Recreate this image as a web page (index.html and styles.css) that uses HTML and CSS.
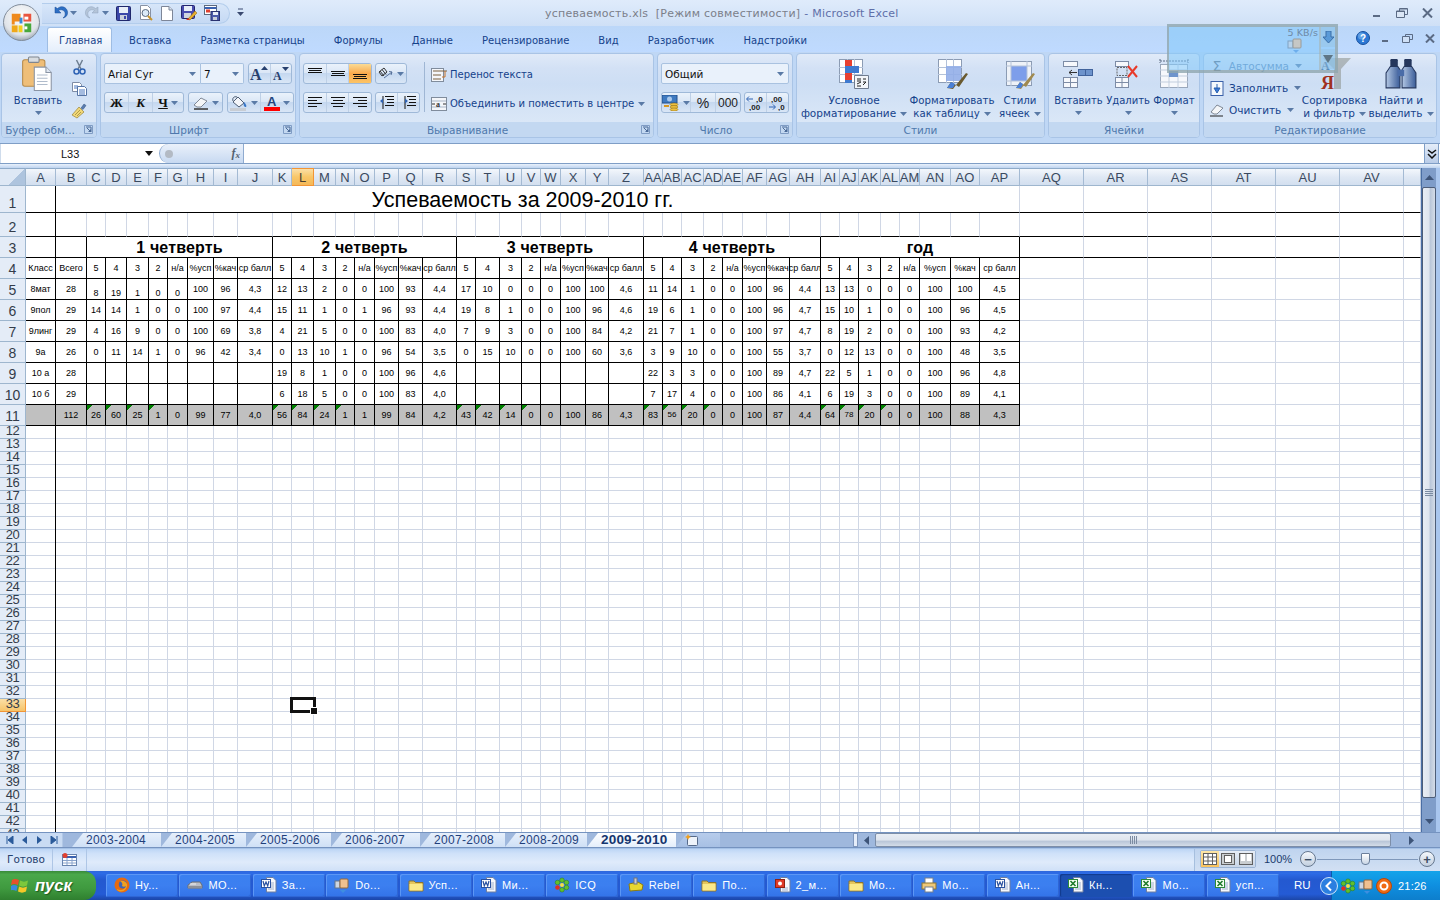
FILE: index.html
```html
<!DOCTYPE html>
<html lang="ru">
<head>
<meta charset="utf-8">
<title>успеваемость.xls [Режим совместимости] - Microsoft Excel</title>
<link rel="stylesheet" href="styles.css">
</head>
<body>
<svg class="defs" aria-hidden="true">
  <symbol id="i-word" viewBox="0 0 16 16"><path d="M5.500 .5h6.500l3 3v11.500h-9.500z" fill="#f6f8fc" stroke="#6f7f9f"/><path d="M7 6h6M7 8h6M7 10h6M7 12h6" stroke="#9fb0cc"/><rect x=".5" y="2.500" width="9" height="8" fill="#fff" stroke="#2a52a0"/><path d="M2 4l1.300 5 1.700-4 1.700 4L8 4" fill="none" stroke="#2a52a0" stroke-width="1.200"/></symbol>
  <symbol id="i-excel" viewBox="0 0 16 16"><path d="M5.500 .5h6.500l3 3v11.500h-9.500z" fill="#f6f8fc" stroke="#6f7f9f"/><path d="M7 6h6M7 8h6M7 10h6M7 12h6" stroke="#9fb0cc"/><rect x=".5" y="2.500" width="9" height="8" fill="#f4fff2" stroke="#2c8a3a"/><path d="M2.500 4l5 5M7.500 4l-5 5" stroke="#1e7a2c" stroke-width="1.600"/></symbol>
  <symbol id="i-folder" viewBox="0 0 16 16"><path d="M1 4h5l1.500 1.500H15V14H1z" fill="#e6c65c" stroke="#8b7430"/><path d="M1.500 7h13v6.500h-13z" fill="#fbe98a"/></symbol>
  <symbol id="i-ff" viewBox="0 0 16 16"><circle cx="8" cy="8" r="7.500" fill="#e66a10"/><circle cx="8.800" cy="7.400" r="4" fill="#3f64b4"/><path d="M3 12c3 2 8 1 9-3-1 1-3 1-4 0 1-2 0-4-2-5 4-1 6 1 7 3 1 4-3 8-7 7.500C4 14 3 13 3 12z" fill="#f0a020"/></symbol>
  <symbol id="i-drive" viewBox="0 0 16 16"><path d="M1 8l4-3h8l2 3v3H1z" fill="#b9bdc5" stroke="#6a6e75"/><path d="M1 9h14v2.500H1z" fill="#8c9098"/><path d="M3 7h6" stroke="#eee"/></symbol>
  <symbol id="i-dm" viewBox="0 0 16 16"><rect x="1" y="4" width="5" height="7" fill="#cdd6e2" stroke="#67768a"/><rect x="6" y="2" width="8" height="9" rx="1" fill="#f0c090" stroke="#94693c"/><path d="M6 13h6l-3 3z" fill="#3f8ee0"/></symbol>
  <symbol id="i-ppt" viewBox="0 0 16 16"><path d="M5.500 .5h6.500l3 3v11.500h-9.500z" fill="#f6f8fc" stroke="#6f7f9f"/><path d="M7 11h6M7 13h6" stroke="#9fb0cc"/><rect x=".5" y="2.500" width="9" height="8" fill="#e03a28" stroke="#902010"/><circle cx="5" cy="6.500" r="2" fill="#fff"/></symbol>
  <symbol id="i-print" viewBox="0 0 16 16"><rect x="4" y="1" width="8" height="6" fill="#fff" stroke="#76808e"/><rect x="1" y="6" width="14" height="6" fill="#eec878" stroke="#8b7430"/><rect x="4" y="10" width="8" height="5" fill="#fff" stroke="#76808e"/></symbol>
  <symbol id="i-icq" viewBox="0 0 16 16"><g fill="#5fc02c" stroke="#2e7a10" stroke-width=".5"><circle cx="8" cy="3.200" r="2.300"/><circle cx="12.500" cy="5.500" r="2.300"/><circle cx="12.500" cy="10.500" r="2.300"/><circle cx="8" cy="12.800" r="2.300"/><circle cx="3.500" cy="5.500" r="2.300"/></g><circle cx="3.500" cy="10.500" r="2.300" fill="#e03020"/><circle cx="8" cy="8" r="2" fill="#f6e040"/></symbol>
  <symbol id="i-rebel" viewBox="0 0 16 16"><path d="M1 7l9-2 5 3-1 5-12 1z" fill="#e9d82e" stroke="#8a7c14"/><rect x="6" y="1" width="3" height="6" fill="#c8ccd2" stroke="#70757c"/></symbol>
  <symbol id="i-dlg" viewBox="0 0 9 9"><path d="M.5.500h8v8h-8z" fill="none" stroke="#7f9cc4"/><path d="M2 2h5v5M3 3l3 3" fill="none" stroke="#4a6a98"/><path d="M4 7h3V4z" fill="#4a6a98"/></symbol>
  <symbol id="i-down" viewBox="0 0 7 4"><path d="M0 0h7L3.500 4z" fill="#5a7aa6"/></symbol>
  <symbol id="i-grid" viewBox="0 0 32 32"><rect x="4.500" y="4.500" width="23" height="23" fill="#fff" stroke="#8c9cb4"/><path d="M4 12.500h24M4 19.500h24M12.500 4v24M19.500 4v24" stroke="#b4c2d8"/></symbol>
</svg>

<header class="titlebar">
  <svg class="orb" viewBox="0 0 38 38" width="37" height="37"><defs><radialGradient id="orbg" cx=".5" cy=".35" r=".7"><stop offset="0" stop-color="#ffffff"/><stop offset=".7" stop-color="#dfe3e8"/><stop offset="1" stop-color="#8c97a4"/></radialGradient></defs><circle cx="19" cy="19" r="18.500" fill="url(#orbg)" stroke="#7e8a98"/><path d="M9 10h9v8H12v3H9z" fill="#ef8a1c"/><path d="M21 10h8v8h-8z" fill="#e8442a" opacity=".9"/><path d="M22 13h4v3h-4z" fill="#fff"/><path d="M9 22h6v7H9z" fill="#f0a818"/><path d="M16 22h4v7h-4z" fill="#f4d01c"/><path d="M22 20h7v9h-7z" fill="#48a83c"/><path d="M17 14h3v6h-3z" fill="#3a8ad8"/><path d="M22 23h3v3h-3z" fill="#fff"/></svg>
  <div class="qat">
    <svg width="16" height="16" viewBox="0 0 16 16" class="q1"><path d="M2 2v6h6L5.500 5.500C8 4 11 5 12 7.500c.6 2 0 4-2 5.500 3-.5 5-3 4.500-6.500C13.500 2 8.500 0 4.500 3.500z" fill="#2d6fc4" stroke="#1b4a94" stroke-width=".5"/></svg>
    <svg width="7" height="4" class="q2"><use href="#i-down"/></svg>
    <svg width="16" height="16" viewBox="0 0 16 16" class="q3"><path d="M14 2v6H8l2.500-2.500C8 4 5 5 4 7.500c-.6 2 0 4 2 5.500-3-.5-5-3-4.500-6.500C2.500 2 7.500 0 11.500 3.500z" fill="#b4c4d8" stroke="#8ea2bc" stroke-width=".5"/></svg>
    <svg width="7" height="4" class="q4"><use href="#i-down"/></svg>
    <svg width="15" height="15" viewBox="0 0 15 15" class="q5"><rect x=".5" y=".5" width="14" height="14" rx="1" fill="#3a46a8" stroke="#20286c"/><rect x="3" y="1" width="9" height="6" fill="#e8eef8"/><rect x="4" y="9" width="7" height="5" fill="#c9cfdc"/><rect x="8" y="10" width="2" height="3" fill="#3a46a8"/></svg>
    <svg width="15" height="16" viewBox="0 0 15 16" class="q6"><path d="M1.500.5h7l3 3v11h-10z" fill="#fff" stroke="#8892a4"/><circle cx="6.500" cy="8" r="3.500" fill="#dbeaf8" stroke="#5a6a80"/><path d="M9 11l4 4" stroke="#c8942a" stroke-width="2"/></svg>
    <svg width="12" height="15" viewBox="0 0 12 15" class="q7"><path d="M.5.500h7.500l3.500 3.500v10.500H.5z" fill="#fff" stroke="#7d8698"/><path d="M8 .5v3.500h3.500" fill="#dce6f4" stroke="#7d8698"/></svg>
    <svg width="16" height="16" viewBox="0 0 16 16" class="q8"><rect x=".5" y=".5" width="13" height="13" rx="1" fill="#4a4cb0" stroke="#23256e"/><rect x="3" y="1" width="8" height="5" fill="#e8eef8"/><rect x="3" y="8" width="7" height="5" fill="#d0d4e0"/><path d="M7 14l7-8 2 2-7 7z" fill="#e8b030" stroke="#8a6410" stroke-width=".5"/><path d="M5 15l2-2 2 2z" fill="#d83020"/></svg>
    <svg width="16" height="16" viewBox="0 0 16 16" class="q9"><rect x=".5" y=".5" width="12" height="9" fill="#fff" stroke="#5c6a80"/><path d="M.5 3h12" stroke="#3a62b0" stroke-width="2"/><rect x="2" y="4.500" width="4" height="3" fill="#e04030"/><rect x="7" y="6.500" width="8.500" height="9" fill="#4a5aa8" stroke="#2a3270"/><rect x="9" y="7" width="5" height="3" fill="#e8eef8"/><rect x="9" y="12" width="4" height="3" fill="#c9cfdc"/></svg>
  </div>
  <svg class="qmore" width="7" height="9" viewBox="0 0 7 9"><path d="M1 1h5" stroke="#3a4a70"/><path d="M0 4h7L3.500 8z" fill="#3a4a70"/></svg>
  <div class="doc"><span class="docname">успеваемость.xls&nbsp; [Режим совместимости]</span> - Microsoft Excel</div>
  <div class="winbtns">
    <svg width="10" height="10" viewBox="0 0 10 10"><path d="M1 7h7v2H1z" fill="#5b6b84"/></svg>
    <svg width="12" height="10" viewBox="0 0 12 10"><path d="M3.500.5h8v6h-8z" fill="none" stroke="#5b6b84"/><path d="M.5 3h8v6.500h-8z" fill="#dbe7f6" stroke="#5b6b84"/><path d="M1 3.500h7M4 1h7" stroke="#5b6b84"/></svg>
    <svg width="11" height="10" viewBox="0 0 11 10"><path d="M1 .5l9 9M10 .5l-9 9" stroke="#5b6b84" stroke-width="2"/></svg>
  </div>
</header>

<nav class="tabs">
  <span class="tab active">Главная</span>
  <span class="tab">Вставка</span>
  <span class="tab">Разметка страницы</span>
  <span class="tab">Формулы</span>
  <span class="tab">Данные</span>
  <span class="tab">Рецензирование</span>
  <span class="tab">Вид</span>
  <span class="tab">Разработчик</span>
  <span class="tab">Надстройки</span>
  <div class="tabbtns">
    <svg width="14" height="14" viewBox="0 0 14 14"><circle cx="7" cy="7" r="6.500" fill="#2c78d4" stroke="#174f9c"/><circle cx="5.500" cy="5" r="3.500" fill="#7fb8f0" opacity=".6"/><text x="7" y="11" class="helpq">?</text></svg>
    <svg width="9" height="9" viewBox="0 0 9 9" class="wb1"><path d="M1 6h6v2H1z" fill="#5b6b84"/></svg>
    <svg width="11" height="9" viewBox="0 0 11 9" class="wb2"><path d="M3.500.5h7v5h-7z" fill="none" stroke="#5b6b84"/><path d="M.5 2.500h7v6h-7z" fill="#cfe0f6" stroke="#5b6b84"/></svg>
    <svg width="10" height="9" viewBox="0 0 10 9" class="wb3"><path d="M1 .5l8 8M9 .5l-8 8" stroke="#5b6b84" stroke-width="2"/></svg>
  </div>
</nav>

<section class="ribbon">
  <div class="group g1">
    <div class="gbody clip">
      <div class="big paste">
        <svg class="bigicon" width="30" height="34" viewBox="0 0 30 34"><rect x=".5" y="3.500" width="21" height="25" rx="2" fill="#efbe78" stroke="#b68a4a"/><rect x="6" y="1" width="10" height="5" rx="1" fill="#d8dce0" stroke="#7f8690"/><path d="M11.500 10.500h11l5 5v17h-16z" fill="#fff" stroke="#8a94a4"/><path d="M22.500 10.500v5h5" fill="#dfe7f2" stroke="#8a94a4"/><path d="M14 18h10M14 21h10M14 24h10M14 27h10" stroke="#b0bccc"/></svg>
        <span>Вставить</span>
        <svg class="arr" width="7" height="4"><use href="#i-down"/></svg>
      </div>
      <div class="clipsmall">
        <svg width="13" height="16" viewBox="0 0 13 16"><path d="M3.500 1l4.500 9M9.500 1L5 10" stroke="#6f7f92" stroke-width="1.500"/><circle cx="3.500" cy="12.500" r="2.500" fill="none" stroke="#2f63b4" stroke-width="1.500"/><circle cx="9.500" cy="12.500" r="2.500" fill="none" stroke="#2f63b4" stroke-width="1.500"/></svg>
        <svg width="15" height="14" viewBox="0 0 15 14"><path d="M.5.500h7l2 2v7H.5z" fill="#fff" stroke="#7d8ba4"/><path d="M5.500 4.500h7l2 2v7h-9z" fill="#fff" stroke="#5674a4"/><path d="M7 8h6M7 10h6M7 12h6M2 4h4M2 6h3" stroke="#4a78c0"/></svg>
        <svg width="16" height="16" viewBox="0 0 16 16"><path d="M10 5l3-4 2 1.500-3 4z" fill="#5a7cb0" stroke="#30507c" stroke-width=".5"/><path d="M1 12l7-8 5 5-7 6z" fill="#f2d878" stroke="#96823a" stroke-width=".7"/><path d="M4 12l5-5M6 13l4-4" stroke="#b09a48"/></svg>
      </div>
    </div>
    <div class="glabel"><span>Буфер обм...</span><svg class="dlg" width="9" height="9"><use href="#i-dlg"/></svg></div>
  </div>

  <div class="group g2">
    <div class="gbody rows">
      <div class="line">
        <span class="combo font">Arial Cyr<svg width="7" height="4"><use href="#i-down"/></svg></span>
        <span class="combo size">7<svg width="7" height="4"><use href="#i-down"/></svg></span>
        <div class="set grow">
          <span class="b"><svg width="20" height="16" viewBox="0 0 20 16"><text x="1" y="14" class="ltr big-a">A</text><path d="M12 4h7L15.500 0z" fill="#27406e"/></svg></span>
          <span class="b"><svg width="20" height="16" viewBox="0 0 20 16"><text x="2" y="14" class="ltr small-a">A</text><path d="M11 1h7l-3.500 4z" fill="#27406e"/></svg></span>
        </div>
      </div>
      <div class="line">
        <div class="set biu">
          <span class="b ltr-b">Ж</span>
          <span class="b ltr-b it">К</span>
          <span class="b ltr-b un">Ч<svg width="7" height="4"><use href="#i-down"/></svg></span>
        </div>
        <div class="set eraser">
          <span class="b"><svg width="16" height="14" viewBox="0 0 16 14"><path d="M1 9l7-7 6 3-6 6H4z" fill="#f4f6f8" stroke="#7f8896"/><path d="M1 13h14" stroke="#333" stroke-width="1.500"/></svg><svg width="7" height="4"><use href="#i-down"/></svg></span>
        </div>
        <div class="set paint">
          <span class="b"><svg width="18" height="16" viewBox="0 0 18 16"><path d="M3 7l5-5 6 6-5 4z" fill="#f4f6fa" stroke="#4f5e74"/><path d="M3 6c-1-3 1-5 4-4" fill="none" stroke="#4f5e74"/><path d="M14 7c2 2 3 4 2 5-2 0-3-2-2-5z" fill="#3a78c8"/><rect x="0" y="13" width="16" height="3" fill="#c8cdd4"/></svg><svg width="7" height="4"><use href="#i-down"/></svg></span>
          <span class="b"><svg width="16" height="16" viewBox="0 0 16 16"><text x="3" y="11" class="color-a">A</text><rect x="0" y="12" width="16" height="4" fill="#f00"/></svg><svg width="7" height="4"><use href="#i-down"/></svg></span>
        </div>
      </div>
    </div>
    <div class="glabel"><span>Шрифт</span><svg class="dlg" width="9" height="9"><use href="#i-dlg"/></svg></div>
  </div>

  <div class="group g3">
    <div class="gbody alignwrap">
      <div class="rows">
        <div class="line">
          <div class="set tri">
            <span class="b"><svg class="al" width="14" height="12"><path d="M0 .5h14M1 2.500h12M0 4.500h14"/></svg></span>
            <span class="b"><svg class="al" width="14" height="12"><path d="M0 3.500h14M1 5.500h12M0 7.500h14"/></svg></span>
            <span class="b on"><svg class="al" width="14" height="12"><path d="M0 6.500h14M1 8.500h12M0 10.500h14"/></svg></span>
          </div>
          <div class="set orient"><span class="b"><svg width="16" height="14" viewBox="0 0 16 14"><path d="M1 5l5-4 3 4-5 4z" fill="none" stroke="#333"/><path d="M2 4l4 5M4 2.500l4 5" stroke="#333"/><path d="M6 11l8-6M11 4.500l3 .5-1 3" fill="none" stroke="#55709a"/></svg><svg width="7" height="4"><use href="#i-down"/></svg></span></div>
        </div>
        <div class="line">
          <div class="set tri">
            <span class="b"><svg class="al" width="14" height="11"><path d="M0 .5h14M0 3.500h9M0 6.500h14M0 9.500h9"/></svg></span>
            <span class="b"><svg class="al" width="14" height="11"><path d="M0 .5h14M2 3.500h10M0 6.500h14M2 9.500h10"/></svg></span>
            <span class="b"><svg class="al" width="14" height="11"><path d="M0 .5h14M5 3.500h9M0 6.500h14M5 9.500h9"/></svg></span>
          </div>
          <div class="set indent">
            <span class="b"><svg width="14" height="13" viewBox="0 0 14 13"><path class="aln" d="M5 .5h9M7 3.500h7M7 6.500h7M5 9.500h9M3 0v13" /><path d="M0 5l3-2.500v5z" fill="#2f63b4"/></svg></span>
            <span class="b"><svg width="14" height="13" viewBox="0 0 14 13"><path class="aln" d="M5 .5h9M7 3.500h7M7 6.500h7M5 9.500h9M3 0v13"/><path d="M6 5L3 2.500v5z" fill="#2f63b4"/></svg></span>
          </div>
        </div>
      </div>
      <div class="vsep"></div>
      <div class="rows wraps">
        <div class="line lbl"><svg width="16" height="14" viewBox="0 0 16 14"><rect x=".5" y=".5" width="12" height="13" fill="#f4f6fa" stroke="#808c9c"/><path d="M2 3h14M2 7h8M2 11h8" stroke="#7a6040"/><path d="M14 3v6h-3" fill="none" stroke="#c8742a"/></svg>Перенос текста</div>
        <div class="line lbl"><svg width="16" height="14" viewBox="0 0 16 14"><rect x=".5" y=".5" width="15" height="13" fill="#f4f6fa" stroke="#808c9c"/><path d="M1 4h14M1 10h14" stroke="#aab6c6"/><text x="5" y="9.500" class="tiny-a">a</text><path d="M1 7h3M12 7h3" stroke="#333"/></svg>Объединить и поместить в центре<svg class="after" width="7" height="4"><use href="#i-down"/></svg></div>
      </div>
    </div>
    <div class="glabel"><span>Выравнивание</span><svg class="dlg" width="9" height="9"><use href="#i-dlg"/></svg></div>
  </div>

  <div class="group g4">
    <div class="gbody rows">
      <div class="line"><span class="combo general">Общий<svg width="7" height="4"><use href="#i-down"/></svg></span></div>
      <div class="line">
        <div class="set money">
          <span class="b"><svg width="18" height="16" viewBox="0 0 18 16"><rect x="0" y="0" width="15" height="8" fill="#3f7ac0" stroke="#24508c"/><circle cx="7.500" cy="4" r="2.500" fill="#a8c8ec"/><ellipse cx="12" cy="9.500" rx="4" ry="1.500" fill="#eec040" stroke="#8a6c10" stroke-width=".5"/><ellipse cx="12" cy="12" rx="4" ry="1.500" fill="#eec040" stroke="#8a6c10" stroke-width=".5"/><ellipse cx="12" cy="14.500" rx="4" ry="1.500" fill="#eec040" stroke="#8a6c10" stroke-width=".5"/><path d="M2 11h5" stroke="#d89820" stroke-width="2"/></svg><svg width="7" height="4"><use href="#i-down"/></svg></span>
          <span class="b numtxt">%</span>
          <span class="b numtxt narrow">000</span>
        </div>
        <div class="set dec">
          <span class="b dectxt"><svg width="20" height="16" viewBox="0 0 20 16"><path d="M1 4h6M3 1.500L.5 4 3 6.500" fill="none" stroke="#2f63b4"/><text x="10" y="7" class="dec-t">,0</text><text x="3" y="15" class="dec-t">,00</text></svg></span>
          <span class="b dectxt"><svg width="20" height="16" viewBox="0 0 20 16"><text x="3" y="7" class="dec-t">,00</text><path d="M1 12h6M5 9.500L7.500 12 5 14.500" fill="none" stroke="#2f63b4"/><text x="10" y="15" class="dec-t">,0</text></svg></span>
        </div>
      </div>
    </div>
    <div class="glabel"><span>Число</span><svg class="dlg" width="9" height="9"><use href="#i-dlg"/></svg></div>
  </div>

  <div class="group g5">
    <div class="gbody bigs">
      <div class="big cond">
        <svg class="bigicon" width="32" height="32" viewBox="0 0 32 32"><use href="#i-grid" width="32" height="32" x="-3" y="-3"/><rect x="7" y="2" width="7" height="6" fill="#e84030"/><rect x="7" y="8" width="7" height="7" fill="#3f7ad0"/><rect x="14" y="8" width="7" height="7" fill="#3f7ad0"/><rect x="7" y="15" width="7" height="7" fill="#e84030"/><rect x="7" y="22" width="7" height="3" fill="#3f7ad0"/><path d="M16.500 17.500h14v13h-14z" fill="#f4f6fa" stroke="#707c90"/><path d="M19 21h4M19 23h4M19 26l4-2M19 28h4M25 21h3M25 24h3M25 27l3-3" stroke="#222"/></svg>
        <span>Условное<br>форматирование<svg class="after" width="7" height="4"><use href="#i-down"/></svg></span>
      </div>
      <div class="big fmt">
        <svg class="bigicon" width="32" height="32" viewBox="0 0 32 32"><use href="#i-grid" width="32" height="32" x="-2" y="-3"/><rect x="10" y="8" width="15" height="15" fill="#92aee8" opacity=".9"/><path d="M11 30l4-6 5 3-3 4zM20 27l10-12 2 1-9 13z" fill="#6a5a30"/><path d="M11 30l4-6 4 2-2 4z" fill="#4a80d8"/></svg>
        <span>Форматировать<br>как таблицу<svg class="after" width="7" height="4"><use href="#i-down"/></svg></span>
      </div>
      <div class="big sty">
        <svg class="bigicon" width="32" height="32" viewBox="0 0 32 32"><rect x="2.500" y="3.500" width="25" height="24" fill="#eef2f8" stroke="#8c9cb4"/><rect x="7" y="8" width="16" height="15" fill="#7d9eea"/><path d="M2 8h26M2 23h26M7 3v25M23 3v25" stroke="#b4c2d8"/><path d="M12 30l4-6 4 3-3 4zM19 27l10-12 2 1-9 13z" fill="#a08a50"/><path d="M12 30l4-6 3 2-2 4z" fill="#4a80d8"/></svg>
        <span>Стили<br>ячеек<svg class="after" width="7" height="4"><use href="#i-down"/></svg></span>
      </div>
    </div>
    <div class="glabel nolaunch"><span>Стили</span></div>
  </div>

  <div class="group g6">
    <div class="gbody bigs">
      <div class="big ins">
        <svg class="bigicon" width="32" height="32" viewBox="0 0 32 32"><g fill="#f6f8fc" stroke="#7d8ca6"><rect x=".5" y="3.500" width="14" height="5"/><rect x=".5" y="19.500" width="14" height="10"/><path d="M7.500 19v11M.5 24.500h14"/></g><rect x="15.500" y="11.500" width="7" height="6" fill="#6e94cc" stroke="#41639c"/><rect x="22.500" y="11.500" width="7" height="6" fill="#6e94cc" stroke="#41639c"/><path d="M6 14.500h8M9 12l-3 2.500 3 2.500" fill="none" stroke="#333"/></svg>
        <span>Вставить</span><svg class="arr" width="7" height="4"><use href="#i-down"/></svg>
      </div>
      <div class="big del">
        <svg class="bigicon" width="32" height="32" viewBox="0 0 32 32"><g fill="#f6f8fc" stroke="#7d8ca6"><rect x="3.500" y="3.500" width="13" height="5"/><rect x="3.500" y="19.500" width="13" height="10"/><path d="M10 19v11M3.500 24.500h13"/></g><path d="M5 9.500h10v8H5z" fill="none" stroke="#666" stroke-dasharray="2 1"/><path d="M16 8l9 11M25 8l-9 11" stroke="#e83a2a" stroke-width="2"/></svg>
        <span>Удалить</span><svg class="arr" width="7" height="4"><use href="#i-down"/></svg>
      </div>
      <div class="big fmtc">
        <svg class="bigicon" width="32" height="32" viewBox="0 0 32 32"><path d="M2 3h28M2 1v4M30 1v4" stroke="#5a6a82" stroke-dasharray="2 1"/><rect x="2.500" y="6.500" width="27" height="23" fill="#f6f8fc" stroke="#9aa8bc"/><path d="M2 12h28M2 18h28M2 24h28M11 6v24M20 6v24" stroke="#c2cede"/><rect x="11" y="13" width="9" height="6" fill="#6e94cc"/></svg>
        <span>Формат</span><svg class="arr" width="7" height="4"><use href="#i-down"/></svg>
      </div>
    </div>
    <div class="glabel nolaunch"><span>Ячейки</span></div>
  </div>

  <div class="group g7">
    <div class="gbody editing">
      <div class="stack">
        <div class="lbl"><span class="sigma">Σ</span>Автосумма<svg class="after" width="7" height="4"><use href="#i-down"/></svg></div>
        <div class="lbl"><svg width="13" height="15" viewBox="0 0 13 15"><rect x=".5" y=".5" width="12" height="14" fill="#f4f8fc" stroke="#3a60a8"/><path d="M6.500 3v5M3.500 7h6L6.500 12z" fill="#3a78d4" stroke="#275fb0"/></svg>Заполнить<svg class="after" width="7" height="4"><use href="#i-down"/></svg></div>
        <div class="lbl"><svg width="14" height="14" viewBox="0 0 14 14"><path d="M1 9l6-7 6 3-6 6H4z" fill="#f4f6f8" stroke="#7f8896"/><path d="M0 13h13" stroke="#222" stroke-width="1.200"/></svg>Очистить<svg class="after" width="7" height="4"><use href="#i-down"/></svg></div>
      </div>
      <div class="big sort">
        <svg class="bigicon" width="32" height="32" viewBox="0 0 32 32"><text x="2" y="12" class="ltr srt-a">A</text><text x="2" y="31" class="ltr srt-ya">Я</text><path d="M4 0h28l-10 11v20h-7V11z" fill="#8b8f8a" opacity=".55"/></svg>
        <span>Сортировка<br>и фильтр<svg class="after" width="7" height="4"><use href="#i-down"/></svg></span>
      </div>
      <div class="big find">
        <svg class="bigicon" width="30" height="32" viewBox="0 0 30 32"><defs><linearGradient id="bin" x1="0" x2="1"><stop offset="0" stop-color="#b4c8e4"/><stop offset="1" stop-color="#3a5c98"/></linearGradient></defs><rect x="5" y="2" width="7" height="8" rx="1" fill="#24365c"/><rect x="18" y="2" width="7" height="8" rx="1" fill="#24365c"/><path d="M3 12l2-3h7l2 3v17H1V15z" fill="url(#bin)" stroke="#24365c"/><path d="M16 12l2-3h7l2 3 2 3v14H16z" fill="url(#bin)" stroke="#24365c"/><rect x="12" y="12" width="6" height="6" fill="#4a6ca8"/></svg>
        <span>Найти и<br>выделить<svg class="after" width="7" height="4"><use href="#i-down"/></svg></span>
      </div>
    </div>
    <div class="glabel nolaunch"><span>Редактирование</span></div>
  </div>
</section>

<section class="fbar">
  <div class="namebox"><span>L33</span><svg width="8" height="5" viewBox="0 0 8 5"><path d="M0 0h8L4 5z" fill="#111"/></svg></div>
  <div class="fxzone"><span class="dot"></span><span class="fx">f<sub>x</sub></span></div>
  <div class="finput"></div>
  <div class="fexpand"><svg width="10" height="10" viewBox="0 0 10 10"><path d="M1 1l4 3 4-3M1 5l4 4 4-4" fill="none" stroke="#111" stroke-width="1.500"/></svg></div>
</section>
<div class="fgap"></div>

<main class="sheet">
  <div class="grid">
    <div class="r colhead">
      <span class="corner"></span><span>A</span><span>B</span><span>C</span><span>D</span><span>E</span><span>F</span><span>G</span><span>H</span><span>I</span><span>J</span><span>K</span><span class="on">L</span><span>M</span><span>N</span><span>O</span><span>P</span><span>Q</span><span>R</span><span>S</span><span>T</span><span>U</span><span>V</span><span>W</span><span>X</span><span>Y</span><span>Z</span><span>AA</span><span>AB</span><span>AC</span><span>AD</span><span>AE</span><span>AF</span><span>AG</span><span>AH</span><span>AI</span><span>AJ</span><span>AK</span><span>AL</span><span>AM</span><span>AN</span><span>AO</span><span>AP</span><span>AQ</span><span>AR</span><span>AS</span><span>AT</span><span>AU</span><span>AV</span><span></span>
    </div>
    <div class="r h27 line-b">
      <span class="rh">1</span><span class="kr"></span><span class="heading">Успеваемость за 2009-2010 гг.</span><span></span><span></span><span></span><span></span><span></span><span></span><span></span>
    </div>
    <div class="r h24 line-b">
      <span class="rh">2</span><span class="kr"></span><span></span><span></span><span></span><span></span><span></span><span></span><span></span><span></span><span></span><span></span><span></span><span></span><span></span><span></span><span></span><span></span><span></span><span></span><span></span><span></span><span></span><span></span><span></span><span></span><span></span><span></span><span></span><span></span><span></span><span></span><span></span><span></span><span></span><span></span><span></span><span></span><span></span><span></span><span></span><span></span><span></span><span></span><span></span><span></span><span></span><span></span><span></span><span></span>
    </div>
    <div class="r h21 line-b">
      <span class="rh">3</span><span class="kr"></span><span class="kr"></span><span class="quarter">1 четверть</span><span class="quarter">2 четверть</span><span class="quarter">3 четверть</span><span class="quarter">4 четверть</span><span class="quarter">год</span><span></span><span></span><span></span><span></span><span></span><span></span><span></span>
    </div>
    <div class="r h21 data tiny">
      <span class="rh">4</span><span>Класс</span><span>Всего</span><span>5</span><span>4</span><span>3</span><span>2</span><span>н/а</span><span>%усп</span><span>%кач</span><span>ср балл</span><span>5</span><span>4</span><span>3</span><span>2</span><span>н/а</span><span>%усп</span><span>%кач</span><span>ср балл</span><span>5</span><span>4</span><span>3</span><span>2</span><span>н/а</span><span>%усп</span><span>%кач</span><span>ср балл</span><span>5</span><span>4</span><span>3</span><span>2</span><span>н/а</span><span>%усп</span><span>%кач</span><span>ср балл</span><span>5</span><span>4</span><span>3</span><span>2</span><span>н/а</span><span>%усп</span><span>%кач</span><span>ср балл</span><span></span><span></span><span></span><span></span><span></span><span></span><span></span>
    </div>
    <div class="r h21 data">
      <span class="rh">5</span><span>8мат</span><span>28</span><span class="lo">8</span><span class="lo">19</span><span class="lo">1</span><span class="lo">0</span><span class="lo">0</span><span>100</span><span>96</span><span>4,3</span><span>12</span><span>13</span><span>2</span><span>0</span><span>0</span><span>100</span><span>93</span><span>4,4</span><span>17</span><span>10</span><span>0</span><span>0</span><span>0</span><span>100</span><span>100</span><span>4,6</span><span>11</span><span>14</span><span>1</span><span>0</span><span>0</span><span>100</span><span>96</span><span>4,4</span><span>13</span><span>13</span><span>0</span><span>0</span><span>0</span><span>100</span><span>100</span><span>4,5</span><span></span><span></span><span></span><span></span><span></span><span></span><span></span>
    </div>
    <div class="r h21 data">
      <span class="rh">6</span><span>9пол</span><span>29</span><span>14</span><span>14</span><span>1</span><span>0</span><span>0</span><span>100</span><span>97</span><span>4,4</span><span>15</span><span>11</span><span>1</span><span>0</span><span>1</span><span>96</span><span>93</span><span>4,4</span><span>19</span><span>8</span><span>1</span><span>0</span><span>0</span><span>100</span><span>96</span><span>4,6</span><span>19</span><span>6</span><span>1</span><span>0</span><span>0</span><span>100</span><span>96</span><span>4,7</span><span>15</span><span>10</span><span>1</span><span>0</span><span>0</span><span>100</span><span>96</span><span>4,5</span><span></span><span></span><span></span><span></span><span></span><span></span><span></span>
    </div>
    <div class="r h21 data">
      <span class="rh">7</span><span>9линг</span><span>29</span><span>4</span><span>16</span><span>9</span><span>0</span><span>0</span><span>100</span><span>69</span><span>3,8</span><span>4</span><span>21</span><span>5</span><span>0</span><span>0</span><span>100</span><span>83</span><span>4,0</span><span>7</span><span>9</span><span>3</span><span>0</span><span>0</span><span>100</span><span>84</span><span>4,2</span><span>21</span><span>7</span><span>1</span><span>0</span><span>0</span><span>100</span><span>97</span><span>4,7</span><span>8</span><span>19</span><span>2</span><span>0</span><span>0</span><span>100</span><span>93</span><span>4,2</span><span></span><span></span><span></span><span></span><span></span><span></span><span></span>
    </div>
    <div class="r h21 data">
      <span class="rh">8</span><span>9а</span><span>26</span><span>0</span><span>11</span><span>14</span><span>1</span><span>0</span><span>96</span><span>42</span><span>3,4</span><span>0</span><span>13</span><span>10</span><span>1</span><span>0</span><span>96</span><span>54</span><span>3,5</span><span>0</span><span>15</span><span>10</span><span>0</span><span>0</span><span>100</span><span>60</span><span>3,6</span><span>3</span><span>9</span><span>10</span><span>0</span><span>0</span><span>100</span><span>55</span><span>3,7</span><span>0</span><span>12</span><span>13</span><span>0</span><span>0</span><span>100</span><span>48</span><span>3,5</span><span></span><span></span><span></span><span></span><span></span><span></span><span></span>
    </div>
    <div class="r h21 data">
      <span class="rh">9</span><span>10 а</span><span>28</span><span></span><span></span><span></span><span></span><span></span><span></span><span></span><span></span><span>19</span><span>8</span><span>1</span><span>0</span><span>0</span><span>100</span><span>96</span><span>4,6</span><span></span><span></span><span></span><span></span><span></span><span></span><span></span><span></span><span>22</span><span>3</span><span>3</span><span>0</span><span>0</span><span>100</span><span>89</span><span>4,7</span><span>22</span><span>5</span><span>1</span><span>0</span><span>0</span><span>100</span><span>96</span><span>4,8</span><span></span><span></span><span></span><span></span><span></span><span></span><span></span>
    </div>
    <div class="r h21 data">
      <span class="rh">10</span><span>10 б</span><span>29</span><span></span><span></span><span></span><span></span><span></span><span></span><span></span><span></span><span>6</span><span>18</span><span>5</span><span>0</span><span>0</span><span>100</span><span>83</span><span>4,0</span><span></span><span></span><span></span><span></span><span></span><span></span><span></span><span></span><span>7</span><span>17</span><span>4</span><span>0</span><span>0</span><span>100</span><span>86</span><span>4,1</span><span>6</span><span>19</span><span>3</span><span>0</span><span>0</span><span>100</span><span>89</span><span>4,1</span><span></span><span></span><span></span><span></span><span></span><span></span><span></span>
    </div>
    <div class="r h21 data total">
      <span class="rh">11</span><span></span><span>112</span><span class="g">26</span><span class="g">60</span><span class="g">25</span><span class="g">1</span><span>0</span><span>99</span><span>77</span><span>4,0</span><span class="g">56</span><span class="g">84</span><span class="g">24</span><span class="g">1</span><span>1</span><span>99</span><span>84</span><span>4,2</span><span class="g">43</span><span class="g">42</span><span class="g">14</span><span class="g">0</span><span>0</span><span>100</span><span>86</span><span>4,3</span><span class="g">83</span><span class="g sm">56</span><span class="g">20</span><span class="g">0</span><span>0</span><span>100</span><span>87</span><span>4,4</span><span class="g">64</span><span class="g sm">78</span><span class="g">20</span><span class="g">0</span><span>0</span><span>100</span><span>88</span><span>4,3</span><span></span><span></span><span></span><span></span><span></span><span></span><span></span>
    </div>
    <div class="r blank">
      <div class="nums"><span>12</span><span>13</span><span>14</span><span>15</span><span>16</span><span>17</span><span>18</span><span>19</span><span>20</span><span>21</span><span>22</span><span>23</span><span>24</span><span>25</span><span>26</span><span>27</span><span>28</span><span>29</span><span>30</span><span>31</span><span>32</span><span class="on">33</span><span>34</span><span>35</span><span>36</span><span>37</span><span>38</span><span>39</span><span>40</span><span>41</span><span>42</span><span>43</span></div>
      <span class="kr"></span><span></span><span></span><span></span><span></span><span></span><span></span><span></span><span></span><span></span><span></span><span></span><span></span><span></span><span></span><span></span><span></span><span></span><span></span><span></span><span></span><span></span><span></span><span></span><span></span><span></span><span></span><span></span><span></span><span></span><span></span><span></span><span></span><span></span><span></span><span></span><span></span><span></span><span></span><span></span><span></span><span></span><span></span><span></span><span></span><span></span><span></span><span></span><span></span>
    </div>
  </div>
  <div class="selection"></div>
  <div class="vscroll">
    <span class="up"><svg width="9" height="5" viewBox="0 0 9 5"><path d="M0 5h9L4.500 0z" fill="#3d5478"/></svg></span>
    <div class="thumb"><svg width="8" height="7" viewBox="0 0 8 7"><path d="M0 .5h8M0 2.500h8M0 4.500h8M0 6.500h8" stroke="#7c8ca2"/></svg></div>
    <span class="dn"><svg width="9" height="5" viewBox="0 0 9 5"><path d="M0 0h9L4.500 5z" fill="#3d5478"/></svg></span>
  </div>
  <div class="edge"></div>
</main>

<section class="sheetbar">
  <div class="nav">
    <svg width="8" height="8" viewBox="0 0 8 8"><path d="M1 0v8M7 0v8L2 4z" stroke="#2a5a9a" fill="#2a5a9a"/></svg>
    <svg width="6" height="8" viewBox="0 0 6 8"><path d="M5 0v8L0 4z" fill="#2a5a9a"/></svg>
    <svg width="6" height="8" viewBox="0 0 6 8"><path d="M1 0v8l5-4z" fill="#2a5a9a"/></svg>
    <svg width="8" height="8" viewBox="0 0 8 8"><path d="M7 0v8M1 0v8l5-4z" stroke="#2a5a9a" fill="#2a5a9a"/></svg>
  </div>
  <div class="sheets">
    <span class="st w89">2003-2004</span>
    <span class="st w85">2004-2005</span>
    <span class="st w85">2005-2006</span>
    <span class="st w89">2006-2007</span>
    <span class="st w85">2007-2008</span>
    <span class="st w82">2008-2009</span>
    <span class="st w89 cur">2009-2010</span>
    <span class="st newst"><svg width="15" height="12" viewBox="0 0 15 12"><rect x="3.500" y="2.500" width="10" height="9" rx="1" fill="#eef3fa" stroke="#566a8a"/><path d="M4 0l1 2 2 1-2 1-1 2-1-2-2-1 2-1z" fill="#f0a020"/></svg></span>
  </div>
  <div class="splitter"></div>
  <div class="hscroll">
    <span class="hl"><svg width="5" height="9" viewBox="0 0 5 9"><path d="M5 0v9L0 4.500z" fill="#3d5478"/></svg></span>
    <div class="hthumb"><svg width="7" height="8" viewBox="0 0 7 8"><path d="M.5 0v8M2.500 0v8M4.500 0v8M6.500 0v8" stroke="#7c8ca2"/></svg></div>
    <span class="hr"><svg width="5" height="9" viewBox="0 0 5 9"><path d="M0 0v9l5-4.500z" fill="#3d5478"/></svg></span>
  </div>
</section>

<footer class="status">
  <span class="ready">Готово</span>
  <span class="macro"><svg width="15" height="13" viewBox="0 0 15 13"><rect x=".5" y="1.500" width="14" height="11" fill="#fff" stroke="#6884ae"/><path d="M1 4h13" stroke="#3a62b0" stroke-width="2"/><path d="M1 7.500h13M1 10h13M5 5v7M10 5v7" stroke="#8aa4cc"/><circle cx="3" cy="2.500" r="2.500" fill="#e04030"/></svg></span>
  <div class="statright">
    <div class="views">
      <span class="vb vbon"><svg width="14" height="12" viewBox="0 0 14 12"><rect x=".5" y=".5" width="13" height="11" fill="#fff" stroke="#5f5f5f"/><path d="M.5 4h13M.5 8h13M5 .5v11M9.500 .5v11" stroke="#5f5f5f"/></svg></span>
      <span class="vb"><svg width="14" height="12" viewBox="0 0 14 12"><rect x=".5" y=".5" width="13" height="11" fill="#c9cdd0" stroke="#5f5f5f"/><rect x="3.500" y="2.500" width="7" height="7" fill="#fff" stroke="#5f5f5f"/></svg></span>
      <span class="vb"><svg width="14" height="12" viewBox="0 0 14 12"><rect x=".5" y=".5" width="13" height="11" fill="#c9cdd0" stroke="#5f5f5f"/><rect x="2" y="1" width="4" height="7" fill="#fff"/><rect x="8" y="1" width="4" height="7" fill="#fff"/></svg></span>
    </div>
    <span class="zoomv">100%</span>
    <span class="zbtn">−</span>
    <div class="slider"><span class="knob"></span></div>
    <span class="zbtn">+</span>
  </div>
</footer>

<div class="taskbar">
  <div class="start"><svg width="18" height="17" viewBox="0 0 18 17"><path d="M1 3c2-1.500 4-1.500 7 0l-1 5c-3-1.500-5-1.500-7 0z" fill="#e8502a"/><path d="M9 3.500c3 1.500 5 1.500 8 0l-1 5c-3 1.500-5 1.500-8 0z" fill="#7cc83c"/><path d="M0 9c2-1.500 4-1.500 6.500 0l-1 5c-3-1.500-5-1.500-6.500 0z" fill="#3a8ae0"/><path d="M8 9.500c3 1.500 5 1.500 8 0l-1 5c-3 1.500-5 1.500-8 0z" fill="#f4c828"/></svg><span>пуск</span></div>
  <div class="tasks">
    <span class="task"><svg width="16" height="16"><use href="#i-ff"/></svg><b>Ну...</b></span>
    <span class="task"><svg width="16" height="16"><use href="#i-drive"/></svg><b>МО...</b></span>
    <span class="task"><svg width="16" height="16"><use href="#i-word"/></svg><b>За...</b></span>
    <span class="task"><svg width="16" height="16"><use href="#i-dm"/></svg><b>Do...</b></span>
    <span class="task"><svg width="16" height="16"><use href="#i-folder"/></svg><b>Усп...</b></span>
    <span class="task"><svg width="16" height="16"><use href="#i-word"/></svg><b>Ми...</b></span>
    <span class="task"><svg width="16" height="16"><use href="#i-icq"/></svg><b>ICQ</b></span>
    <span class="task"><svg width="16" height="16"><use href="#i-rebel"/></svg><b>Rebel</b></span>
    <span class="task"><svg width="16" height="16"><use href="#i-folder"/></svg><b>По...</b></span>
    <span class="task"><svg width="16" height="16"><use href="#i-ppt"/></svg><b>2_м...</b></span>
    <span class="task"><svg width="16" height="16"><use href="#i-folder"/></svg><b>Мо...</b></span>
    <span class="task"><svg width="16" height="16"><use href="#i-print"/></svg><b>Мо...</b></span>
    <span class="task"><svg width="16" height="16"><use href="#i-word"/></svg><b>Ан...</b></span>
    <span class="task act"><svg width="16" height="16"><use href="#i-excel"/></svg><b>Кн...</b></span>
    <span class="task"><svg width="16" height="16"><use href="#i-excel"/></svg><b>Мо...</b></span>
    <span class="task"><svg width="16" height="16"><use href="#i-excel"/></svg><b>усп...</b></span>
  </div>
  <span class="lang">RU</span>
  <div class="tray">
    <svg class="chev" width="18" height="18" viewBox="0 0 18 18"><circle cx="9" cy="9" r="8.500" fill="#2b7fe0" stroke="#cfe6fb"/><path d="M11 4.500L6.500 9l4.500 4.500" fill="none" stroke="#fff" stroke-width="2"/></svg>
    <svg width="16" height="16"><use href="#i-icq"/></svg>
    <svg width="16" height="16"><use href="#i-dm"/></svg>
    <svg width="16" height="16" viewBox="0 0 16 16"><circle cx="8" cy="8" r="7.500" fill="#f06a14" stroke="#b84808"/><circle cx="8" cy="8" r="3.500" fill="none" stroke="#fff" stroke-width="2"/></svg>
    <span class="clock">21:26</span>
  </div>
</div>

<aside class="meter">
  <div class="mmain"><span class="kbs">5 KB/s</span><svg width="18" height="16" viewBox="0 0 16 16" class="mpc"><g opacity=".5"><use href="#i-dm"/></g></svg></div>
  <div class="mside">
    <span><svg width="11" height="13" viewBox="0 0 11 13"><path d="M3 0h5v6h3l-5.500 6L0 6h3z" fill="#5a9ad8" stroke="#3a6ea8"/></svg></span>
    <span><svg width="10" height="8" viewBox="0 0 10 8"><path d="M0 0h10L5 8z" fill="#5f7686"/></svg></span>
  </div>
</aside>
</body>
</html>
```
FILE: styles.css
```css
*{box-sizing:border-box}
html,body{margin:0;padding:0}
body{width:1440px;height:900px;overflow:hidden;position:relative;display:flex;flex-direction:column;font-family:"DejaVu Sans","Noto Sans",sans-serif;font-size:10px;color:#15428b;background:#bfd7f5}
svg{display:block;flex:none}
.defs{position:absolute;width:0;height:0}

/* title bar */
.titlebar{height:26px;flex:none;display:flex;align-items:center;background:linear-gradient(#dfebfb 0,#d7e6f9 50%,#cfe0f6 100%);position:relative;z-index:2}
.orb{position:absolute;left:3px;top:4px}
.qat{margin-left:42px;width:188px;height:21px;display:flex;align-items:center;border:1px solid #b3cdec;border-left:0;border-radius:0 11px 11px 0;background:linear-gradient(#d7e6f9,#c5d9f4);padding-left:11px}
.q2{margin-left:1px}.q3{margin-left:7px}.q4{margin-left:2px}.q5{margin-left:7px}.q6{margin-left:8px}.q7{margin-left:7px}.q8{margin-left:8px}.q9{margin-left:7px}
.qmore{margin-left:7px;margin-top:-1px}
.doc{margin-left:301px;font-size:11px;color:#5f6fa8;white-space:pre;letter-spacing:.25px}
.docname{color:#7b7f8a}
.winbtns{margin-left:auto;display:flex;align-items:center;gap:14px;padding-right:7px}

/* tabs */
.tabs{height:26px;flex:none;display:flex;align-items:flex-end;padding-left:47px;background:linear-gradient(#bcd7f8,#bfdaff);position:relative}
.tab{height:24px;padding:0 14px 0 15px;display:flex;align-items:center;font-size:10px;letter-spacing:.02px;color:#15428b;white-space:nowrap}
.tab.active{padding:0 10px 0 11px;margin-right:2px;width:65px;background:linear-gradient(#fff,#e4eefb);border:1px solid #9ebde4;border-bottom:0;border-radius:3px 3px 0 0;height:25px}
.tabbtns{position:absolute;right:5px;top:5px;display:flex;align-items:center}
.wb1{margin-left:11px}.wb2{margin-left:12px}.wb3{margin-left:12px}
.helpq{font:bold 10px "Liberation Sans",sans-serif;fill:#fff;text-anchor:middle}

/* ribbon */
.ribbon{height:91px;flex:none;display:flex;gap:3px;padding:1px 0 0 1px;background:#bfd7f5}
.group{height:85px;display:flex;flex-direction:column;border:1px solid #a9c4e6;border-radius:4px;background:linear-gradient(#e0eaf8 0,#d3e1f5 14px,#cddef4 30px,#dae7f7 68px);overflow:hidden}
.g1{width:96px}.g2{width:196px}.g3{width:355px}.g4{width:136px}.g5{width:249px}.g6{width:152px}.g7{width:234px}
.gbody{height:68px;flex:none;display:flex}
.glabel{height:15px;flex:none;background:#c3d8f1;display:flex;align-items:center;justify-content:center;position:relative;color:#4f78ac;font-size:10.5px;padding-right:18px}
.glabel.nolaunch{padding-right:0}
.dlg{position:absolute;right:3px;top:3px}
.rows{display:flex;flex-direction:column;gap:8px;padding-top:9px}
.line{height:21px;display:flex;gap:3px;align-items:stretch}
.g2 .rows,.g2 .gbody{padding-left:3px}
.g4 .gbody{padding-left:3px}

/* controls */
.combo{display:flex;align-items:center;justify-content:space-between;background:#e9f1fb;border:1px solid #a9c2e0;padding:0 4px 0 3px;font-size:10.5px;color:#111;height:21px}
.font{width:97px;border-radius:2px 0 0 2px}
.size{width:43px;margin-left:-3px;border-left:0;border-radius:0 2px 2px 0}
.general{width:128px;border-radius:2px}
.set{display:flex;border:1px solid #9fb9d8;border-radius:3px;background:linear-gradient(#eaf2fb 0,#dbe7f6 45%,#c5d8f0 50%,#d9e6f6 100%)}
.b{display:flex;align-items:center;justify-content:center;gap:3px;border-right:1px solid #bed0e6;flex:1}
.b:last-child{border-right:0}
.b.on{background:linear-gradient(#fbdb94,#f9a94d 50%,#fcc466)}
.grow{width:44px;margin-left:1px}
.biu{width:80px}
.eraser{width:35px;margin-left:1px}
.paint{width:67px;margin-left:1px}
.ltr{font-family:"Liberation Serif",serif;font-weight:700}
.big-a{font-size:16px;fill:#27406e}
.small-a{font-size:12px;fill:#27406e}
.color-a{font:700 13px "Liberation Sans",sans-serif;fill:#24457e}
.ltr-b{font:700 13px "Liberation Serif",serif;color:#111}
.it{font-style:italic}
.un{text-decoration:underline;flex:1.3}
.tiny-a{font:700 8px "Liberation Serif",serif;fill:#333}
.dec-t{font:700 8px "Liberation Sans",sans-serif;fill:#222}

.g3 .gbody{padding-left:3px}
.alignwrap{display:flex}
.tri{width:69px}
.orient{width:32px}
.indent{width:45px}
.al path,.aln{stroke:#111;fill:none}
.al{shape-rendering:crispEdges}
.vsep{width:1px;height:50px;margin:8px 6px 0 4px;background:#9fb6d4}
.rows.wraps{padding-top:10px}
.lbl{display:flex;align-items:center;gap:3px;white-space:nowrap;font-size:10.5px;color:#15428b}
.wraps .lbl{font-size:10px}
.after{display:inline-block;margin-left:4px;vertical-align:middle}
.lbl .after{margin-left:1px}

.money{width:80px}
.dec{width:45px}
.numtxt{font:14px "Liberation Sans",sans-serif;color:#222}
.narrow{font-size:12px}

/* big buttons */
.big{display:flex;flex-direction:column;align-items:center;text-align:center;font-size:10.2px;line-height:13px;color:#15428b;position:relative;white-space:nowrap}
.bigicon{height:36px;margin:2px 0 2px}
.bigs{padding-left:6px}
.paste{width:62px;margin-left:5px;font-size:10px}
.paste .bigicon,.ins .bigicon,.del .bigicon,.fmtc .bigicon,.sort .bigicon,.find .bigicon,.cond .bigicon,.fmt .bigicon,.sty .bigicon{width:32px}
.arr{margin-top:4px}
.clipsmall{display:flex;flex-direction:column;align-items:center;gap:7px;width:16px;margin-left:2px;padding-top:5px}
.cond{width:102px;font-size:10.5px}.fmt{width:86px;margin-left:4px}.sty{width:40px;margin-left:5px}
.ins{width:47px;font-size:10px}.del{width:42px;margin-left:5px;font-size:10px}.fmtc{width:42px;margin-left:4px;font-size:10.2px}
.editing{padding-left:6px}
.stack{width:92px;display:flex;flex-direction:column;gap:6px;padding-top:4px}
.stack .lbl{height:16px;gap:5px}
.stack .lbl svg:first-child,.sigma{width:14px;text-align:center;font-size:14px}
.sigma{color:#5a6a7e}
.stack .lbl:first-child{color:#5d86b6}
.sort{width:65px;margin-left:0;font-size:10.5px}
.find{width:58px;margin-left:5px;font-size:10.5px}
.srt-a{font-size:12px;fill:#26406c}
.srt-ya{font-size:18px;fill:#a03020}

/* formula bar */
.fbar{height:21px;flex:none;display:flex;background:#fff;border-top:1px solid #7f9ec6;border-bottom:1px solid #7f9ec6;margin-bottom:0}
.namebox{width:158px;display:flex;align-items:center;padding:0 5px 0 60px;justify-content:space-between;font:11px "Liberation Sans",sans-serif;color:#111;border-left:1px solid #cfdcec}
.fxzone{width:85px;margin-left:1px;display:flex;align-items:center;justify-content:space-between;padding:0 3px 0 5px;border-radius:10px 0 0 10px;background:linear-gradient(#eaf1fb,#c7d9f1);border:1px solid #8fabd0;border-width:0 1px 0 1px}
.dot{width:8px;height:8px;border-radius:50%;background:#b3bac4}
.fx{font:italic 700 12px "Liberation Serif",serif;color:#54606f}
.fx sub{font-size:9px;vertical-align:-1px;line-height:0}
.finput{flex:1}
.fexpand{width:15px;display:flex;align-items:center;justify-content:center;background:linear-gradient(#e4edf9,#b9cce8);border:1px solid #7f9ec6;border-width:0 1px;margin-right:1px}
.fgap{height:4px;flex:none;background:linear-gradient(#e9f1fb,#bfd4f0)}

/* sheet */
.sheet{height:664px;flex:none;display:flex;position:relative;overflow:hidden;background:#fff}
.grid{width:1421px;flex:none;--cols:26px 30px 31px 19px 21px 22px 19px 20px 26px 24px 35px 19px 22px 22px 19px 20px 24px 24px 34px 19px 24px 22px 19px 20px 25px 23px 35px 19px 19px 22px 19px 20px 24px 23px 31px 19px 19px 22px 19px 20px 31px 29px 40px 64px 64px 64px 64px 64px 64px 17px}
.r{display:grid;grid-template-columns:var(--cols)}
.r>span{border-right:1px solid #d0d7e5;border-bottom:1px solid #d0d7e5;display:flex;align-items:center;justify-content:center;overflow:hidden;white-space:nowrap;font:9px/1 "Liberation Sans",sans-serif;color:#000}
.h27{height:27px}.h24{height:24px}.h21{height:21px}
.colhead{height:18px}
.colhead>span{background:linear-gradient(#f3f7fc,#dfe8f4 50%,#d3dfef);border-right-color:#a4bad3;border-bottom-color:#9eb6ce;font:13px/1 "Liberation Sans",sans-serif;color:#3a4a60;border-top:1px solid #8fabc9}
.colhead>.on{background:linear-gradient(#fbdfa6,#f8c768 50%,#f5b858);border-color:#f29536;color:#4a4030}
.colhead>.corner{background:linear-gradient(135deg,#dee8f5 60%,#aec4de 60%);border-right-color:#9eb6ce}
.r>.rh{background:#e4ecf7;border-right-color:#9eb6ce;border-bottom-color:#9eb6ce;font:14px/1 "Liberation Sans",sans-serif;color:#333c4a;align-items:flex-end;padding-bottom:2px}
.r>.kr{border-right-color:#000}
.line-b>span:not(.rh){border-bottom-color:#000}
.r>.heading{grid-column:span 41;font-size:21.5px;padding:3px 30px 0 0}
.r>.quarter{grid-column:span 8;font:700 16px/1 "Liberation Sans",sans-serif;letter-spacing:.15px;color:#000;border-right-color:#000;padding-top:2px}
.data>span:nth-child(n+2):nth-child(-n+43){border-right-color:#000;border-bottom-color:#000}
.r>.lo{align-items:flex-end;padding-bottom:1px}
.total>span:nth-child(n+2):nth-child(-n+43){background-color:#c0c0c0}
.r>.g{background-image:linear-gradient(135deg,#008000 4px,transparent 4px)}
.r>.sm{font-size:8px}
.blank{height:416px;background:repeating-linear-gradient(#fff 0 12px,#d0d7e5 12px 13px)}
.nums{display:flex;flex-direction:column}
.nums span{height:13px;flex:none;background:#e4ecf7;border-right:1px solid #9eb6ce;border-bottom:1px solid #9eb6ce;font:13px/9px "Liberation Sans",sans-serif;letter-spacing:-.4px;color:#333c4a;text-align:center}
.nums .on{background:linear-gradient(#fbdfa6,#f6c46a);border-color:#f29536}
.blank>span{border-bottom:0}
.selection{position:absolute;left:290px;top:529px;width:26px;height:16px;border:3px solid #111}
.selection::after{content:"";position:absolute;right:-5px;bottom:-5px;width:6px;height:6px;background:#111;border:1px solid #fff}

.vscroll{width:15px;flex:none;display:flex;flex-direction:column;background:#7f9dc9;border-left:1px solid #4a6ea4}
.up,.dn{height:19px;flex:none;display:flex;align-items:center;justify-content:center}
.dn{margin-top:auto;height:34px;padding-top:13px}
.thumb{height:611px;background:linear-gradient(90deg,#e8edf4 0,#dfe5ee 50%,#b9c6d8 60%,#d4dce8 100%);border:1px solid #4e5e78;display:flex;align-items:center;justify-content:center;border-radius:2px}
.edge{width:4px;flex:none;background:#a9c6ee}

/* sheet tabs */
.sheetbar{height:16px;flex:none;display:flex;background:#9fb8dd;border-top:1px solid #7593c0;border-bottom:1px solid #7593c0}
.nav{width:63px;flex:none;display:flex;align-items:center;gap:8px;padding-left:6px;background:#c9dbf3;border-right:1px solid #b2c8e6}
.sheets{display:flex;flex:none;width:790px;padding-left:9px}
.st{display:flex;align-items:center;padding-left:14px;font:12px/1 "Liberation Sans",sans-serif;letter-spacing:.3px;color:#1f3f7b;background:linear-gradient(#e6effb,#cfe0f6);clip-path:polygon(0 100%,11px 0,100% 0,100% 100%);white-space:nowrap}
.w89{width:89px}.w85{width:85px}.w82{width:82px}
.cur{font-weight:700;background:linear-gradient(#fff,#e4eefb);color:#15356e;font-size:13.5px;padding-left:14px;letter-spacing:.2px}
.newst{width:44px;padding-left:8px;background:linear-gradient(#b7cceb,#a7c0e4)}
.splitter{width:5px;flex:none;background:#e6eefa;border:1px solid #7f97bd}
.hscroll{flex:1;display:flex;align-items:center}
.hl{width:17px;display:flex;justify-content:center}
.hthumb{width:516px;height:14px;background:linear-gradient(#e8edf4,#dfe5ee 50%,#b9c6d8 60%,#d4dce8);border:1px solid #7d8ea8;border-radius:2px;display:flex;align-items:center;justify-content:center}
.hr{width:40px;padding-left:18px}

/* status */
.status{height:23px;flex:none;display:flex;align-items:center;background:linear-gradient(#bcd5f5 0,#cfe1f9 20%,#dfebfb 60%,#cfe0f7 100%);border-top:1px solid #a6c2e6;color:#24416f;font-size:10.5px}
.ready{width:53px;padding:0 0 2px 7px;height:100%;display:flex;align-items:center;border-right:1px solid #aec6e6}
.macro{width:34px;height:100%;display:flex;align-items:center;justify-content:center;border-right:1px solid #aec6e6;padding-bottom:2px}
.statright{margin-left:auto;width:246px;height:100%;display:flex;align-items:center;background:linear-gradient(#bfd4ef,#d2e0f3);border-left:1px solid #a6bfde;padding:0 5px 2px 5px;color:#1b3a6c}
.views{display:flex;width:56px;height:18px;border:1px solid #9db5d4;border-radius:2px;flex:none}
.vb{flex:1;display:flex;align-items:center;justify-content:center;background:linear-gradient(#e6edf6,#c8d6e8)}
.vbon{background:linear-gradient(#fde6a7,#f9c25c)}
.zoomv{width:44px;flex:none;text-align:center;font:11px "Liberation Sans",sans-serif}
.zbtn{width:16px;height:16px;flex:none;border-radius:50%;display:flex;align-items:center;justify-content:center;border:1px solid #66788f;background:linear-gradient(#f5f8fc,#c2cfdf);font:700 13px/1 "Liberation Sans",sans-serif;color:#3d4e64}
.slider{flex:1;height:1px;background:#7f98bb;position:relative;margin:0 1px}
.knob{position:absolute;left:44px;top:-6px;width:9px;height:12px;background:linear-gradient(#fff,#c9d6e6);border:1px solid #6b7f9b;border-radius:1px 1px 4px 4px}

/* taskbar */
.taskbar{height:29px;flex:none;display:flex;align-items:center;background:linear-gradient(#2e68dc 0,#2d6be6 8%,#2459d0 30%,#245bd5 80%,#1b46a8 100%);font-family:"Liberation Sans",sans-serif;color:#fff;font-size:11px;padding-bottom:1px}
.start{width:96px;height:29px;flex:none;display:flex;align-items:center;gap:6px;padding-left:11px;margin-bottom:-1px;border-radius:0 12px 12px 0;background:linear-gradient(#388a38 0,#4aa84a 12%,#3f9a3f 60%,#2f7f2f 100%);font:italic 700 16.500px "Liberation Sans",sans-serif;text-shadow:1px 1px 1px #1f5a1f}
.start span{margin-top:-1px}
.tasks{display:flex;gap:1px;margin-left:10px;width:1179px;flex:none}
.task{width:72px;height:23px;flex:none;margin-right:.4px;display:flex;align-items:center;gap:5px;padding-left:8px;background:linear-gradient(#3a80f0 0,#3c7ff0 50%,#3373e8 100%);border-radius:2px;box-shadow:inset 1px 1px 0 #5c97f5,inset -1px -1px 0 #2f66d4}
.task b{font-weight:400;letter-spacing:.4px;white-space:nowrap}
.act{background:#1c4fb0;box-shadow:inset 1px 1px 1px #123a8c}
.lang{width:44px;flex:none;margin-left:2px;padding-left:7px;font-size:11.500px}
.tray{flex:1;height:29px;display:flex;align-items:center;gap:2px;background:linear-gradient(#14a4ea,#0f8fe0 50%,#0d7ecc);border-left:1px solid #0a5caa;position:relative;margin-bottom:-1px}
.chev{margin-left:-12px;margin-right:0}
.clock{margin-left:4px;font-size:11px;letter-spacing:.2px}

/* bandwidth widget floating over ribbon */
.meter{position:absolute;left:1167px;top:24px;width:171px;height:49px;display:flex;background:rgba(130,200,250,.55);border:3px solid rgba(150,152,140,.55);border-left-width:2px;z-index:3}
.mmain{flex:1;display:flex;flex-direction:column;align-items:flex-end;padding:0 1px 0 0}
.kbs{font-size:9.5px;color:#6e8aa6;letter-spacing:.1px}
.mpc{margin-right:14px;margin-top:-1px}
.mside{width:16px;display:flex;flex-direction:column;gap:2px;border-left:2px solid rgba(170,175,165,.5)}
.mside span{height:20px;display:flex;align-items:center;justify-content:center;background:rgba(150,190,220,.4)}
```
